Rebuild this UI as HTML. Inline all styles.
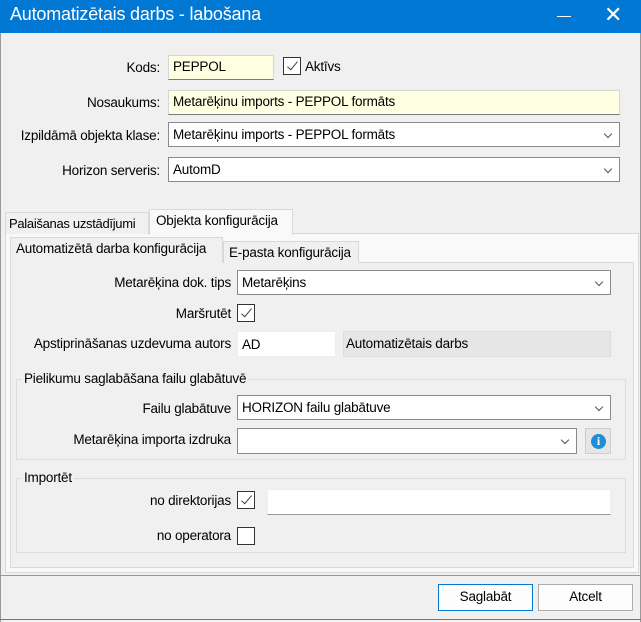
<!DOCTYPE html><html><head><meta charset="utf-8"><style>
*{box-sizing:border-box;margin:0;padding:0}
body{width:641px;height:622px;background:#f0f0f0;font-family:"Liberation Sans",sans-serif;font-size:13.5px;color:#000;position:relative;overflow:hidden;letter-spacing:-0.2px}
.a{position:absolute;white-space:nowrap}
.lbl{position:absolute;text-align:right;white-space:nowrap}
.fld{position:absolute;background:#fff;border:1px solid #d6d6d6;border-bottom:1px solid #7a7a7a;padding:3px 4px;white-space:nowrap}
.y{background:#ffffe1}
.cmb{position:absolute;background:#fff;border:1px solid #8a8a8a;padding:4px 4px;white-space:nowrap}
.cmb:after{content:"";position:absolute;right:8px;top:8px;width:5px;height:5px;border-right:1px solid #555;border-bottom:1px solid #555;transform:rotate(45deg)}
.cb{position:absolute;width:18px;height:18px;border:1px solid #333;background:#fff}
.cb.c:after{content:"";position:absolute;left:6px;top:1px;width:4px;height:10px;border-right:1px solid #444;border-bottom:1px solid #444;transform:rotate(40deg)}
.grp{position:absolute;border:1px solid #dcdcdc}
.gt{position:absolute;background:#f0f0f0;padding:0 2px}
.btn{position:absolute;border:1px solid #adadad;background:#fdfdfd;text-align:center;line-height:24px}
</style></head><body>
<div class="a" style="left:0;top:0;width:641px;height:33px;background:#0078d4;color:#fff;font-size:18px;padding:4px 10px">Automatizētais darbs - labošana</div>
<div class="a" style="left:557px;top:16px;width:14px;height:1px;background:#fff"></div>
<div class="a" style="left:604px;top:2px;color:#fff;font-size:22px">✕</div>
<div class="a" style="left:0;top:33px;width:1px;height:589px;background:#999"></div>
<div class="a" style="left:640px;top:33px;width:1px;height:589px;background:#999"></div>

<div class="lbl" style="right:481px;top:60px">Kods:</div>
<div class="fld y" style="left:168px;top:55px;width:106px;height:25px">PEPPOL</div>
<div class="cb c" style="left:283px;top:57px"></div>
<div class="a" style="left:305px;top:59px">Aktīvs</div>
<div class="lbl" style="right:481px;top:95px">Nosaukums:</div>
<div class="fld y" style="left:168px;top:90px;width:452px;height:25px">Metarēķinu imports - PEPPOL formāts</div>
<div class="lbl" style="right:481px;top:128px">Izpildāmā objekta klase:</div>
<div class="cmb" style="left:168px;top:122px;width:452px;height:25px">Metarēķinu imports - PEPPOL formāts</div>
<div class="lbl" style="right:481px;top:163px">Horizon serveris:</div>
<div class="cmb" style="left:168px;top:157px;width:452px;height:25px">AutomD</div>

<div class="a" style="left:5px;top:233px;width:634px;height:340px;border:1px solid #d9d9d9;background:#f9f9f9"></div>
<div class="a" style="left:5px;top:212px;width:144px;height:22px;border:1px solid #d9d9d9;border-bottom:none;padding:3px 3px;background:#f0f0f0;font-size:13px;letter-spacing:-0.3px">Palaišanas uzstādījumi</div>
<div class="a" style="left:149px;top:209px;width:144px;height:26px;border:1px solid #d9d9d9;border-bottom:none;padding:3px 6px;background:#f9f9f9">Objekta konfigurācija</div>

<div class="a" style="left:10px;top:262px;width:624px;height:306px;border:1px solid #d9d9d9;background:#f0f0f0"></div>
<div class="a" style="left:223px;top:241px;width:136px;height:22px;border:1px solid #d9d9d9;border-bottom:none;padding:3px 5px;background:#f0f0f0">E-pasta konfigurācija</div>
<div class="a" style="left:10px;top:237px;width:213px;height:26px;border:1px solid #d9d9d9;border-bottom:none;padding:3px 5px;background:#f0f0f0">Automatizētā darba konfigurācija</div>

<div class="lbl" style="right:410px;top:275px">Metarēķina dok. tips</div>
<div class="cmb" style="left:237px;top:270px;width:374px;height:25px">Metarēķins</div>
<div class="lbl" style="right:410px;top:306px">Maršrutēt</div>
<div class="cb c" style="left:237px;top:304px"></div>
<div class="lbl" style="right:410px;top:336px">Apstiprināšanas uzdevuma autors</div>
<div class="fld" style="left:237px;top:331px;width:99px;height:26px;border:1px solid #eee;padding:5px 4px">AD</div>
<div class="a" style="left:343px;top:331px;width:268px;height:26px;background:#e6e6e6;border:1px solid #ddd;padding:4px 2px">Automatizētais darbs</div>

<div class="grp" style="left:16px;top:379px;width:610px;height:81px"></div>
<div class="gt" style="left:22px;top:371px">Pielikumu saglabāšana failu glabātuvē</div>
<div class="lbl" style="right:410px;top:401px">Failu glabātuve</div>
<div class="cmb" style="left:237px;top:395px;width:374px;height:25px">HORIZON failu glabātuve</div>
<div class="lbl" style="right:410px;top:432px">Metarēķina importa izdruka</div>
<div class="cmb" style="left:237px;top:428px;width:340px;height:26px"></div>
<div class="a" style="left:585px;top:428px;width:26px;height:26px;border:1px solid #ccc;background:#e6e6e6"><div style="position:absolute;left:5px;top:5px;width:15px;height:15px;border-radius:50%;background:#1e8fd6;color:#fff;font-weight:bold;font-size:12px;text-align:center;line-height:15px;font-family:'Liberation Serif',serif">i</div></div>

<div class="grp" style="left:16px;top:478px;width:610px;height:75px"></div>
<div class="gt" style="left:22px;top:470px">Importēt</div>
<div class="lbl" style="right:410px;top:493px">no direktorijas</div>
<div class="cb c" style="left:237px;top:491px"></div>
<div class="fld" style="left:267px;top:489px;width:344px;height:26px;border:1px solid #eee;border-bottom:1px solid #999"></div>
<div class="lbl" style="right:410px;top:528px">no operatora</div>
<div class="cb" style="left:237px;top:527px"></div>

<div class="a" style="left:1px;top:575px;width:639px;height:1px;background:#999"></div>
<div class="btn" style="left:438px;top:584px;width:95px;height:27px;border:1px solid #0078d7">Saglabāt</div>
<div class="btn" style="left:538px;top:584px;width:95px;height:27px">Atcelt</div>
<div class="a" style="left:0;top:619px;width:641px;height:1px;background:#777"></div>
</body></html>
